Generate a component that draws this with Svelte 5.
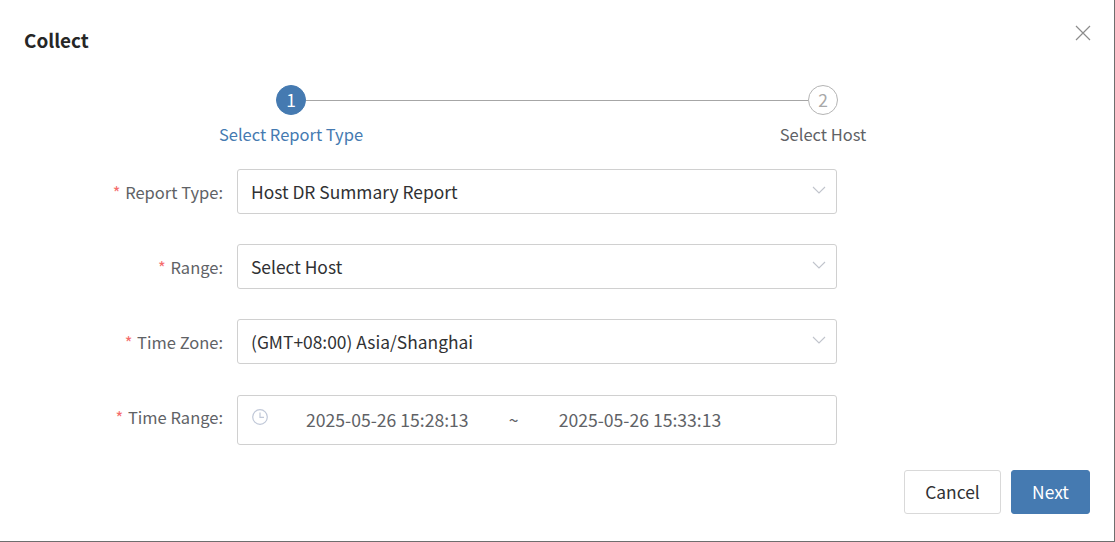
<script>
  const fields = [
    { label: 'Report Type:', value: 'Host DR Summary Report' },
    { label: 'Range:', value: 'Select Host' },
    { label: 'Time Zone:', value: '(GMT+08:00) Asia/Shanghai' }
  ];
</script>

<div class="dialog">
  <header class="head">
    <h2>Collect</h2>
    <button class="close" aria-label="Close">
      <svg width="16" height="16" viewBox="0 0 16 16"><path d="M1 1 15 15M15 1 1 15" stroke="#8c8c8c" stroke-width="1.2" fill="none" /></svg>
    </button>
  </header>

  <div class="steps">
    <div class="step active">
      <span class="num">1</span>
      <span class="name">Select Report Type</span>
    </div>
    <div class="line"></div>
    <div class="step">
      <span class="num">2</span>
      <span class="name">Select Host</span>
    </div>
  </div>

  <form class="form">
    {#each fields as f}
      <div class="row">
        <span class="label"><i>*</i> {f.label}</span>
        <div class="control">
          <span class="value">{f.value}</span>
          <svg class="arrow" width="14" height="8" viewBox="0 0 14 8"><path d="M1 1 7 7 13 1" stroke="#c0c4cc" stroke-width="1.1" fill="none" /></svg>
        </div>
      </div>
    {/each}
    <div class="row">
      <span class="label up"><i>*</i> Time Range:</span>
      <div class="control range">
        <svg class="clock" width="16" height="16" viewBox="0 0 16 16"><circle cx="8" cy="8" r="7.3" stroke="#c0c8d8" stroke-width="1.2" fill="none" /><path d="M8 3.6V8.4H12" stroke="#c0c8d8" stroke-width="1.2" fill="none" /></svg>
        <span class="date">2025-05-26 15:28:13</span>
        <span class="sep">~</span>
        <span class="date">2025-05-26 15:33:13</span>
      </div>
    </div>
  </form>

  <footer class="foot">
    <button class="btn">Cancel</button>
    <button class="btn primary">Next</button>
  </footer>
</div>

<style>
  :global(body) {
    margin: 0;
    background: #fff;
  }
  .dialog {
    width: 1115px;
    height: 542px;
    box-sizing: border-box;
    border-right: 1px solid #6e6e6e;
    border-bottom: 1px solid #6e6e6e;
    font-family: "Noto Sans CJK SC", "Noto Sans", sans-serif;
    font-size: 17.4px;
    color: #303133;
    background: #fff;
    display: flex;
    flex-direction: column;
  }
  .head {
    height: 82px;
    padding: 0 24px;
    display: flex;
    justify-content: space-between;
    flex-shrink: 0;
  }
  h2 {
    margin: 27px 0 0;
    font-size: 18.9px;
    line-height: 26px;
    font-weight: 700;
    color: #262626;
  }
  .close {
    border: 0;
    background: none;
    padding: 0;
    margin: 25px -1px 0 0;
    width: 16px;
    height: 16px;
    line-height: 0;
  }
  .steps {
    display: flex;
    align-items: flex-start;
    margin-left: 276px;
    width: 562px;
    height: 87px;
    flex-shrink: 0;
  }
  .step {
    width: 200px;
    flex-shrink: 0;
    display: flex;
    flex-direction: column;
    align-items: center;
    margin: 3px -85px 0;
    position: relative;
    z-index: 1;
  }
  .num {
    width: 30px;
    height: 30px;
    box-sizing: border-box;
    border-radius: 50%;
    border: 1px solid #b4b4b4;
    background: #fff;
    color: #a8a8a8;
    display: flex;
    align-items: center;
    justify-content: center;
    padding-bottom: 2px;
    font-size: 17.4px;
  }
  .name {
    margin-top: 7px;
    line-height: 24px;
    font-size: 16.5px;
    color: #606266;
    white-space: nowrap;
  }
  .active .num {
    background: #457ab1;
    border-color: #457ab1;
    color: #fff;
  }
  .active .name {
    color: #457ab1;
  }
  .line {
    flex: 1;
    height: 1px;
    background: #a6a6a6;
    margin-top: 18px;
  }
  .form {
    display: flex;
    flex-direction: column;
    gap: 30px;
  }
  .row {
    display: flex;
    align-items: center;
  }
  .label {
    width: 223px;
    text-align: right;
    color: #606266;
    padding-right: 14px;
    font-size: 16.5px;
    margin-top: 1px;
    white-space: nowrap;
  }
  .label.up {
    margin-top: -5px;
  }
  .label i {
    color: #f56c6c;
    font-style: normal;
    margin-right: 1px;
  }
  .control {
    width: 600px;
    height: 45px;
    box-sizing: border-box;
    border: 1px solid #d0d0d0;
    border-radius: 3px;
    padding: 0 10px 0 13px;
    display: flex;
    align-items: center;
    justify-content: space-between;
  }
  .arrow {
    margin-top: -3px;
  }
  .range {
    height: 50px;
    margin-top: 1px;
    justify-content: flex-start;
    padding-left: 14px;
    color: #606266;
    font-size: 17.6px;
  }
  .range .date,
  .range .sep {
    position: relative;
    top: -1px;
  }
  .clock {
    margin: 0 38px 0 0;
    position: relative;
    top: -3px;
    flex-shrink: 0;
  }
  .sep {
    width: 90px;
    text-align: center;
  }
  .foot {
    margin: 25px 24px 0 0;
    display: flex;
    justify-content: flex-end;
    gap: 10px;
  }
  .btn {
    height: 44px;
    width: 97px;
    box-sizing: border-box;
    border: 1px solid #d9d9d9;
    border-radius: 3px;
    background: #fff;
    color: #303133;
    font: inherit;
    padding: 0 0 2px;
  }
  .primary {
    width: 79px;
    background: #457ab1;
    border-color: #457ab1;
    color: #fff;
  }
</style>
